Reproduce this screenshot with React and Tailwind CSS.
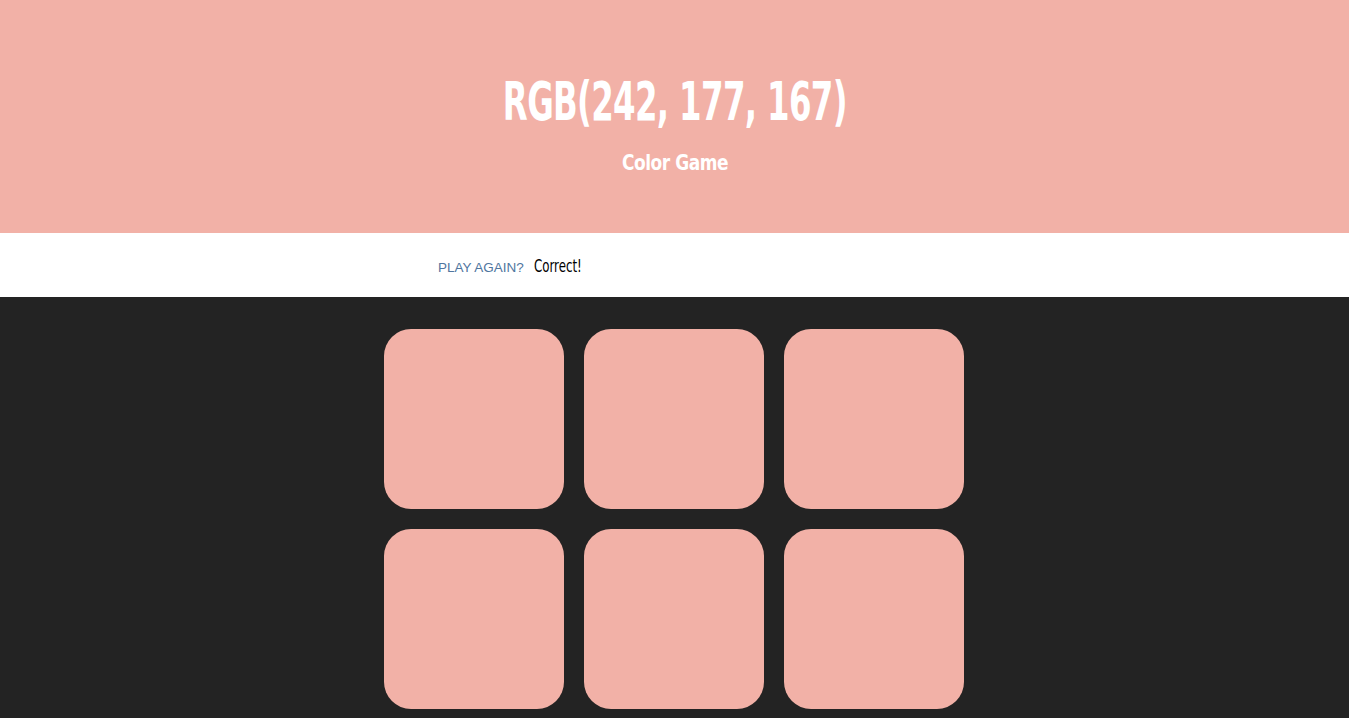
const COLOR = 'rgb(242, 177, 167)';

const title = { fontFamily: '"DejaVu Sans Condensed", "Liberation Sans", sans-serif' };

export default function App() {
  const squares = [0, 1, 2, 3, 4, 5];

  return (
    <div className="min-h-screen bg-[#232323]">
      <div className="h-[233px] bg-[#f2b1a7] flex flex-col items-center justify-center text-white pt-[16px]">
        <h1 className="text-[54px] font-bold leading-none tracking-[-1px] scale-x-[0.667] whitespace-nowrap" style={title}>
          RGB(242, 177, 167)
        </h1>
        <h2 className="text-[21px] font-bold leading-none mt-[24px] tracking-[-0.5px] scale-x-[0.9] whitespace-nowrap" style={title}>
          Color Game
        </h2>
      </div>

      <div className="h-[64px] bg-white flex justify-center pr-px">
        <div className="w-[600px] h-full flex items-center pl-[64px] pt-[2px]">
          <button className="text-[13.5px] uppercase text-[#4f76a0] font-['Liberation_Sans',sans-serif] mr-[10px] mt-[4px]">
            Play Again?
          </button>
          <span className="text-[18px] text-black mt-[-1px] scale-x-[0.73] origin-left whitespace-nowrap" style={title}>
            Correct!
          </span>
        </div>
      </div>

      <div className="flex justify-center pr-px">
        <div className="w-[600px] pt-[22px] grid grid-cols-3">
          {squares.map((i) => (
            <div key={i} className="m-[10px] h-[180px] rounded-[27px]" style={{ backgroundColor: COLOR }} />
          ))}
        </div>
      </div>
    </div>
  );
}
